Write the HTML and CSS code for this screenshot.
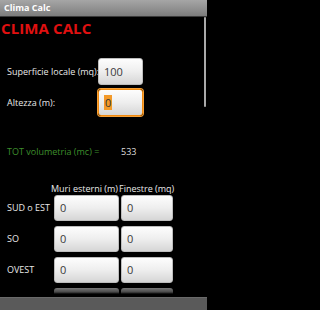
FILE: index.html
```html
<!DOCTYPE html>
<html>
<head>
<meta charset="utf-8">
<link rel="stylesheet" href="styles.css">
</head>
<body>
<div class="app">
  <div class="titlebar">Clima Calc</div>
  <div class="content">
    <div class="heading">CLIMA CALC</div>
    <div class="row first">
      <span class="label">Superficie locale (mq):</span>
      <div class="field">100</div>
    </div>
    <div class="row">
      <span class="label">Altezza (m):</span>
      <div class="field focused"><span class="sel">0</span></div>
    </div>
    <div class="tot">
      <span class="tot-label">TOT volumetria (mc) =</span>
      <span class="tot-value">533</span>
    </div>
    <div class="heads">
      <span class="head muri">Muri esterni (m)</span>
      <span class="head">Finestre (mq)</span>
    </div>
    <div class="grid">
      <span class="glabel">SUD o EST</span>
      <div class="field">0</div>
      <div class="field">0</div>

      <span class="glabel">SO</span>
      <div class="field">0</div>
      <div class="field">0</div>

      <span class="glabel">OVEST</span>
      <div class="field">0</div>
      <div class="field">0</div>

      <span></span>
      <div class="field faded"></div>
      <div class="field faded"></div>
    </div>
    <div class="scrollbar"></div>
  </div>
  <div class="bottombar"></div>
</div>
</body>
</html>
```
FILE: styles.css
```css
html, body {
  margin: 0;
  padding: 0;
  background: #000;
}
.app {
  width: 207px;
  height: 310px;
  display: flex;
  flex-direction: column;
  overflow: hidden;
  font-family: "Open Sans", "DejaVu Sans", sans-serif;
  background: #000;
}
.titlebar {
  height: 16px;
  flex: none;
  background: linear-gradient(#a6a6a6, #8e8e8e 60%, #7c7c7c);
  border-bottom: 1px solid #3a3a3a;
  color: #fff;
  font-weight: bold;
  font-size: 9px;
  line-height: 16px;
  padding-left: 4px;
}
.content {
  flex: 1;
  position: relative;
  overflow: hidden;
}
.heading {
  margin-top: 2px;
  padding-left: 1px;
  color: #e01010;
  font-weight: bold;
  font-size: 15px;
  line-height: 18px;
  letter-spacing: 0.1px;
}
.row {
  display: flex;
  align-items: center;
  height: 27px;
  margin-top: 4px;
}
.row.first {
  margin-top: 21px;
}
.label {
  width: 98px;
  padding-left: 7px;
  box-sizing: border-box;
  color: #e8e8e8;
  font-size: 9px;
  white-space: nowrap;
}
.field {
  box-sizing: border-box;
  height: 26px;
  border-radius: 3px;
  background: linear-gradient(#fdfdfd, #eeeeee 50%, #d6d6d6);
  border: 1px solid #bdbdbd;
  color: #3a3a3a;
  font-size: 11px;
  line-height: 24px;
  padding-left: 5px;
}
.row .field {
  width: 45px;
  height: 27px;
  line-height: 25px;
}
.field.focused {
  border: 1px solid #f08a10;
  box-shadow: 0 0 0 1px #f7a035;
}
.sel {
  background: #f39a2a;
  color: #333;
  padding: 0 1px;
}
.tot {
  margin-top: 29px;
  height: 14px;
  line-height: 14px;
  display: flex;
  font-size: 9px;
}
.tot-label {
  width: 121px;
  padding-left: 7px;
  box-sizing: border-box;
  color: #3d8f2c;
  white-space: nowrap;
}
.tot-value {
  color: #dcdcdc;
}
.heads {
  margin-top: 24px;
  height: 12px;
  display: flex;
  padding-left: 51px;
  font-size: 9px;
  line-height: 12px;
}
.head {
  color: #e8e8e8;
  white-space: nowrap;
}
.head.muri {
  width: 68px;
}
.grid {
  display: grid;
  grid-template-columns: 52px 65px 52px;
  grid-auto-rows: 26px;
  column-gap: 2px;
  row-gap: 5px;
}
.glabel {
  color: #e8e8e8;
  font-size: 9px;
  line-height: 26px;
  padding-left: 7px;
  white-space: nowrap;
}
.field.faded {
  border: none;
  background: linear-gradient(#7a7a7a, #4a4a4a 4px, #000 6px);
}
.scrollbar {
  position: absolute;
  right: 1px;
  top: 0;
  width: 2px;
  height: 90px;
  background: linear-gradient(90deg, #8a8a8a, #c8c8c8, #8a8a8a);
  border-radius: 1px;
}
.bottombar {
  height: 13px;
  flex: none;
  background: #5a5a5a;
  border-top: 1px solid #6a6a6a;
  box-sizing: border-box;
}
```
